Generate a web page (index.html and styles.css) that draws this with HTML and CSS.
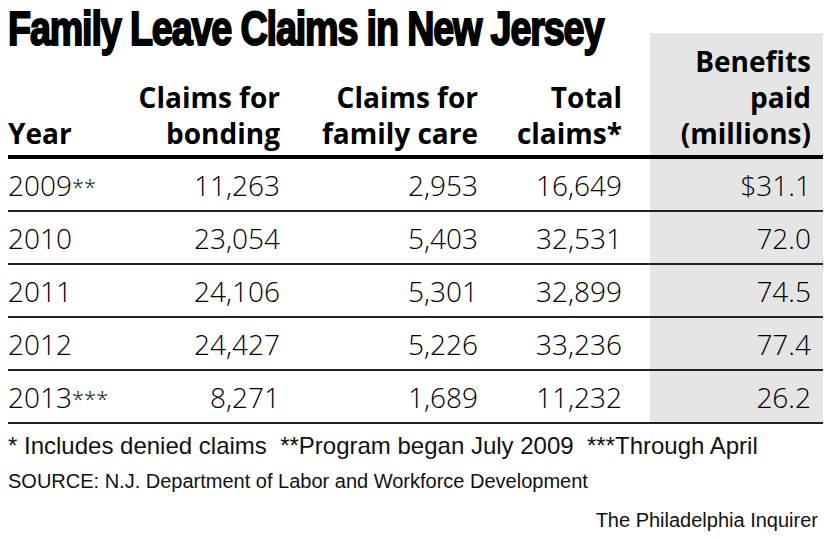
FILE: index.html
```html
<!DOCTYPE html>
<html>
<head>
<meta charset="utf-8">
<link rel="stylesheet" href="styles.css">
</head>
<body>
<div class="page">
  <div class="title-wrap"><h1 class="title">Family Leave Claims in New Jersey</h1></div>
  <div class="table">
    <div class="cell head c1">Year</div>
    <div class="cell head c2">Claims for<br>bonding</div>
    <div class="cell head c3">Claims for<br>family care</div>
    <div class="cell head c4">Total<br>claims*</div>
    <div class="cell head c5">Benefits<br>paid<br>(millions)</div>

    <div class="cell c1">2009<span class="ast">**</span></div>
    <div class="cell c2">11,263</div>
    <div class="cell c3">2,953</div>
    <div class="cell c4">16,649</div>
    <div class="cell c5">$31.1</div>

    <div class="cell c1">2010</div>
    <div class="cell c2">23,054</div>
    <div class="cell c3">5,403</div>
    <div class="cell c4">32,531</div>
    <div class="cell c5">72.0</div>

    <div class="cell c1">2011</div>
    <div class="cell c2">24,106</div>
    <div class="cell c3">5,301</div>
    <div class="cell c4">32,899</div>
    <div class="cell c5">74.5</div>

    <div class="cell c1">2012</div>
    <div class="cell c2">24,427</div>
    <div class="cell c3">5,226</div>
    <div class="cell c4">33,236</div>
    <div class="cell c5">77.4</div>

    <div class="cell c1">2013<span class="ast">***</span></div>
    <div class="cell c2">8,271</div>
    <div class="cell c3">1,689</div>
    <div class="cell c4">11,232</div>
    <div class="cell c5">26.2</div>
  </div>
  <p class="note">* Includes denied claims&nbsp; **Program began July 2009&nbsp; ***Through April</p>
  <p class="source">SOURCE: N.J. Department of Labor and Workforce Development</p>
  <p class="credit">The Philadelphia Inquirer</p>
</div>
</body>
</html>
```
FILE: styles.css
```css
html, body {
  margin: 0;
  padding: 0;
  background: #fff;
  color: #111;
}
.page {
  width: 815px;
  padding-left: 8px;
}
.title-wrap {
  height: 33px;
}
.title {
  display: inline-block;
  margin: 0;
  font-family: "Liberation Sans", sans-serif;
  font-weight: 700;
  font-size: 49px;
  line-height: 56px;
  letter-spacing: -1.5px;
  white-space: nowrap;
  color: #000;
  -webkit-text-stroke: 2px #000;
  transform: scaleX(0.77);
  transform-origin: 0 0;
}
.table {
  display: grid;
  grid-template-columns: 92px 190px 198px 162px 173px;
  font-family: "Open Sans", sans-serif;
  font-size: 28px;
}
.cell {
  display: flex;
  align-items: center;
  justify-content: flex-end;
  text-align: right;
  height: 51px;
  border-bottom: 2px solid #222;
  padding-right: 10px;
  color: #000;
  font-weight: 300;
}
.cell.c1 {
  justify-content: flex-start;
  text-align: left;
}
.cell.c4 { padding-right: 28px; }
.cell.c5 {
  padding-right: 12px;
  background: #e5e5e5;
}
.cell.head {
  height: auto;
  align-items: flex-end;
  font-weight: 700;
  line-height: 36px;
  padding-top: 10px;
  padding-bottom: 4px;
  border-bottom: 4px solid #000;
  color: #000;
}
.ast {
  font-size: 22px;
  align-self: flex-start;
  margin-top: 12px;
}
.note {
  margin: 8px 0 0;
  font-family: "Liberation Sans", sans-serif;
  font-size: 24px;
  line-height: 28px;
  color: #111;
}
.source {
  margin: 7px 0 0;
  font-family: "Liberation Sans", sans-serif;
  font-size: 20px;
  line-height: 28px;
  color: #111;
}
.credit {
  margin: 11px 0 0;
  padding-right: 5px;
  text-align: right;
  font-family: "Liberation Sans", sans-serif;
  font-size: 20px;
  line-height: 28px;
  color: #111;
}
```
